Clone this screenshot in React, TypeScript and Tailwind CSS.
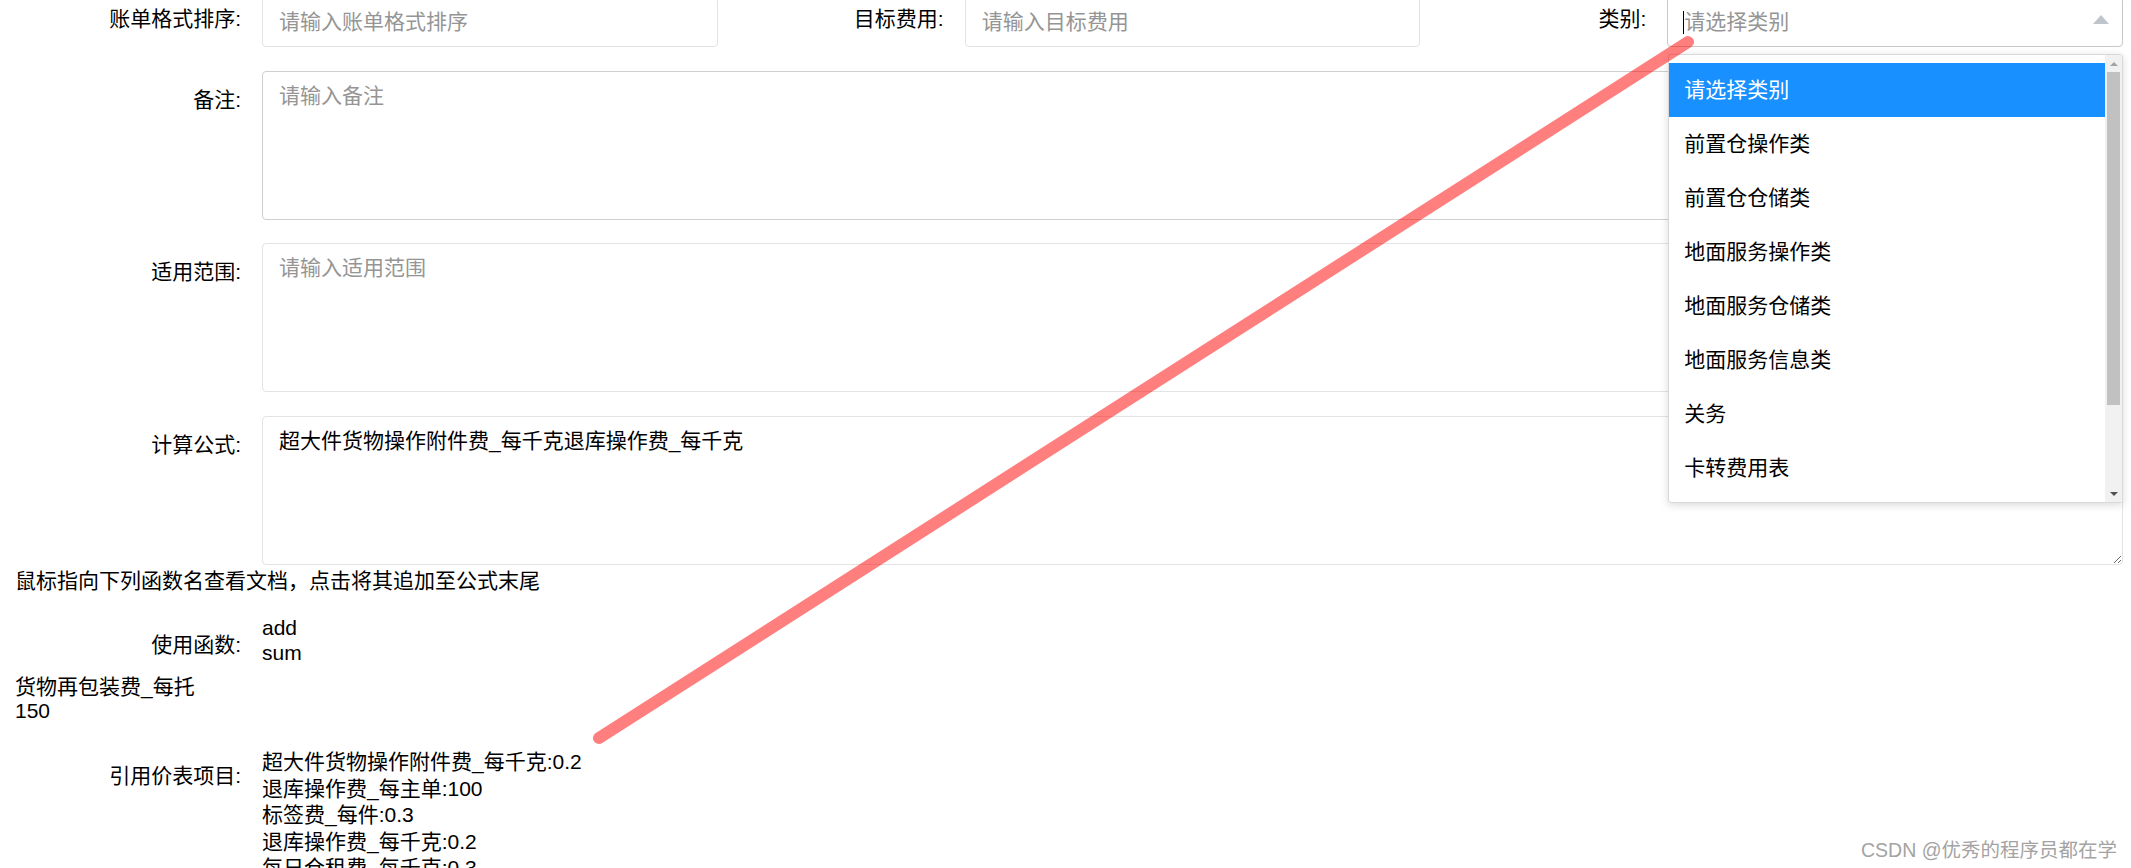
import React from 'react'

const options = ['请选择类别', '前置仓操作类', '前置仓仓储类', '地面服务操作类', '地面服务仓储类', '地面服务信息类', '关务', '卡转费用表']

const priceItems = [
  '超大件货物操作附件费_每千克:0.2',
  '退库操作费_每主单:100',
  '标签费_每件:0.3',
  '退库操作费_每千克:0.2',
  '每日仓租费_每千克:0.3',
  '货物再包装费_每托:150',
]

function Field({ label, placeholder }: { label: string, placeholder: string }) {
  return (
    <div className="flex items-start">
      <div className="w-[247px] shrink-0 pr-[21px] text-right leading-[44px]">{label}</div>
      <input
        readOnly
        placeholder={placeholder}
        className="h-[50px] min-w-0 flex-1 rounded-[4px] border border-[#e3e3e3] bg-white pl-[16px] text-[21px] outline-none placeholder:text-[#959595]"
      />
    </div>
  )
}

function CategorySelect() {
  return (
    <div className="flex items-start">
      <div className="w-[247px] shrink-0 pr-[21px] text-right leading-[44px]">类别:</div>
      <div className="relative flex-1">
        <div className="flex h-[50px] items-center rounded-[4px] border border-[#c8c8c8] bg-white pl-[15px] pr-[13px]">
          <span className="h-[23px] w-[1px] bg-black" />
          <span className="flex-1 text-[#959595]">请选择类别</span>
          <span className="mb-[5px] h-0 w-0 border-x-[8.5px] border-b-[9px] border-x-transparent border-b-[#c0c4cc]" />
        </div>
        <div className="absolute left-[1px] right-0 top-[calc(100%+7px)] z-10 flex h-[449px] rounded-[3px] border border-[#d9d9d9] bg-white shadow-[0_2px_8px_rgba(0,0,0,0.15)]">
          <div className="flex-1 overflow-hidden pt-[8px]">
            {options.map((o, i) => (
              <div
                key={o}
                className={i === 0 ? 'h-[54px] bg-[#1890ff] pl-[15px] leading-[54px] text-white' : 'h-[54px] pl-[15px] leading-[54px] text-black'}
              >
                {o}
              </div>
            ))}
          </div>
          <div className="flex w-[17px] flex-col bg-[#f1f1f1]">
            <div className="flex h-[17px] items-center justify-center">
              <span className="h-0 w-0 border-x-[4px] border-b-[4px] border-x-transparent border-b-[#a3a3a3]" />
            </div>
            <div className="mx-[2px] h-[333px] bg-[#c1c1c1]" />
            <div className="flex-1" />
            <div className="flex h-[17px] items-center justify-center">
              <span className="h-0 w-0 border-x-[4px] border-t-[4px] border-x-transparent border-t-[#505050]" />
            </div>
          </div>
        </div>
      </div>
    </div>
  )
}

function AreaField({ label, placeholder, value, border }: { label: string, placeholder: string, value?: string, border: string }) {
  return (
    <div className="flex items-start">
      <div className="w-[247px] shrink-0 pr-[21px] text-right leading-[58px]">{label}</div>
      <textarea
        readOnly
        placeholder={placeholder}
        defaultValue={value}
        className={`block h-[149px] min-w-0 flex-1 rounded-[4px] border ${border} bg-white px-[16px] pt-[10px] text-[21px] leading-[28px] text-black outline-none placeholder:text-[#959595]`}
      />
    </div>
  )
}

export default function App() {
  return (
    <div className="relative h-[868px] w-full overflow-hidden bg-white font-['Liberation_Sans','Noto_Sans_CJK_SC',sans-serif] text-[21px] text-black">
      <div className="pl-[15px] pr-[8px]">
        <div className="relative z-10 -mt-[3px] grid grid-cols-3">
          <Field label="账单格式排序:" placeholder="请输入账单格式排序" />
          <Field label="目标费用:" placeholder="请输入目标费用" />
          <CategorySelect />
        </div>

        <div className="mt-[24px]">
          <AreaField label="备注:" placeholder="请输入备注" border="border-[#cfcfcf]" />
        </div>
        <div className="mt-[23px]">
          <AreaField label="适用范围:" placeholder="请输入适用范围" border="border-[#e3e3e3]" />
        </div>
        <div className="mt-[24px]">
          <AreaField label="计算公式:" placeholder="" value="超大件货物操作附件费_每千克退库操作费_每千克" border="border-[#e3e3e3]" />
        </div>

        <div className="mt-[2px] leading-[27px]">鼠标指向下列函数名查看文档，点击将其追加至公式末尾</div>

        <div className="mt-[21px] flex items-start">
          <div className="w-[247px] shrink-0 pr-[21px] text-right leading-[60px]">使用函数:</div>
          <div className="leading-[25px]">
            <div>add</div>
            <div>sum</div>
          </div>
        </div>

        <div className="leading-[24px]">
          <div>货物再包装费_每托</div>
          <div>150</div>
        </div>

        <div className="mt-[24px] flex items-start">
          <div className="w-[247px] shrink-0 pr-[21px] text-right leading-[58px]">引用价表项目:</div>
          <div className="pt-[2px] leading-[26.5px]">
            {priceItems.map(p => (
              <div key={p}>{p}</div>
            ))}
          </div>
        </div>
      </div>

      <div className="absolute bottom-[6px] right-[14px] z-30 text-[19.5px] leading-[24px] text-[#a3a3a3]">CSDN @优秀的程序员都在学</div>

      <svg className="pointer-events-none absolute inset-0 z-20" width="2131" height="868">
        <line x1="599" y1="738" x2="1688" y2="42" stroke="rgb(255,0,0)" strokeOpacity="0.5" strokeWidth="12" strokeLinecap="round" />
      </svg>
    </div>
  )
}
